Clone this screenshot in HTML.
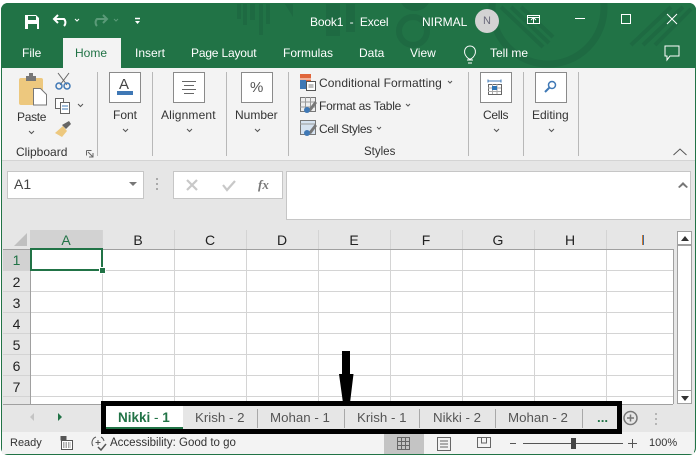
<!DOCTYPE html>
<html><head><meta charset="utf-8"><style>
html,body{margin:0;padding:0;background:#fff}
#r{position:relative;width:700px;height:458px;overflow:hidden;background:#fff;font-family:"Liberation Sans",sans-serif;font-size:12px;color:#333}
.a{position:absolute}
.t{position:absolute;white-space:nowrap;line-height:14px}
.w{color:#fff;font-size:12px}
.box{position:absolute;width:30px;height:29px;border:1px solid #8a8a8a;background:#fff;box-sizing:content-box}
.sep{position:absolute;top:72px;width:1px;height:84px;background:#b8b8b8}
.c{position:absolute;font-size:14px;line-height:16px;text-align:center;color:#222;top:232px}
.n{position:absolute;left:3px;width:27px;text-align:center;font-size:14px;line-height:16px;color:#222}
.tab{position:absolute;top:410px;font-size:13.3px;line-height:16px;white-space:nowrap;color:#555}
.v{position:absolute;top:409px;width:1px;height:19px;background:#a8a8a8}
</style></head><body><div id="r">
<div class="a" style="left:1px;top:3px;width:695px;height:452px;background:#e6e6e6;border-radius:7px;overflow:hidden;box-shadow:inset 0 0 0 1px #217346">
 <div class="a" style="left:0;top:0;width:695px;height:65px;background:#217346"></div>
 <svg class="a" style="left:0;top:0" width="695" height="65">
  <g fill="#1e6a42"><rect x="236" y="1" width="4" height="15"/><rect x="242" y="1" width="4" height="21"/><rect x="249" y="1" width="5" height="16"/><rect x="258" y="1" width="4" height="31"/><rect x="265" y="1" width="4" height="20"/><path d="M284 1h8v13z"/><rect x="325" y="1" width="14" height="32"/><rect x="345" y="1" width="9" height="28"/></g>
  <circle cx="412" cy="28" r="14" fill="none" stroke="#1e6a42" stroke-width="6"/>
  <circle cx="414" cy="-8" r="16" fill="#1e6a42"/>
  <circle cx="547" cy="5" r="56" fill="none" stroke="#1e6a42" stroke-width="7"/>
  <g stroke="#1e6a42" stroke-width="4" fill="none"><path d="M500 4l42 40M510 4l38 36M520 4l32 30M630 42l40-38M642 42l40-38M654 42l36-36"/></g>
 </svg>
 <div class="a" style="left:62px;top:35px;width:58px;height:31px;background:#f3f3f3"></div>
 <div class="a" style="left:1px;top:65px;width:693px;height:92px;background:#f3f3f3;border-bottom:1px solid #d4d4d4"></div>
</div>
<svg class="a" style="left:0;top:0" width="700" height="70" fill="none" stroke="#fff">
 <path d="M25 15h11l3 3v11H25z" fill="#fff" stroke="none"/><rect x="28" y="16" width="8" height="4" fill="#217346" stroke="none"/><rect x="28" y="24" width="9" height="5" fill="#217346" stroke="none"/>
 <path d="M54 19h10a5 5 0 0 1 0 7M58 15l-4 4 4 4" stroke-width="2"/>
 <path d="M75 19l2 2 2-2" stroke-width="1"/>
 <path d="M107 19H97a5 5 0 0 0 0 7M103 15l4 4-4 4" stroke-width="2" stroke="#5a9a78"/>
 <path d="M114 19l2 2 2-2" stroke-width="1" stroke="#5a9a78"/>
 <path d="M135 18.500h5" stroke-width="1.500"/><path d="M135 21h5l-2.500 3z" fill="#fff" stroke="none"/>
 <rect x="527.500" y="15.500" width="12" height="8" stroke-width="1"/><path d="M527 17.500h13M533.500 23v-5M531 20l2.500-2.500 2.500 2.500" stroke-width="1"/>
 <path d="M575 18.500h10" stroke-width="1"/>
 <rect x="621.500" y="14.500" width="9" height="9" stroke-width="1"/>
 <path d="M667 14l10 10M677 14l-10 10" stroke-width="1"/>
 <path d="M469 59c-7-5-5-13 1-13s8 8 1 13zM467 60h6M468 63h4" stroke-width="1"/>
 <path d="M665 46h14v10h-9l-3 4v-4h-2z" stroke-width="1"/>
</svg>
<div class="t w" style="left:310px;top:15px;letter-spacing:-.15px">Book1 &nbsp;-&nbsp; Excel</div>
<div class="t w" style="left:422px;top:15px">NIRMAL</div>
<div class="a" style="left:475px;top:9px;width:24px;height:24px;border-radius:12px;background:#d3d3d3;color:#6a6a7a;text-align:center;line-height:24px;font-size:11px">N</div>
<div class="t w" style="left:22px;top:46px">File</div>
<div class="t" style="left:75px;top:46px;color:#217346">Home</div>
<div class="t w" style="left:135px;top:46px">Insert</div>
<div class="t w" style="left:191px;top:46px;letter-spacing:-.18px">Page Layout</div>
<div class="t w" style="left:283px;top:46px">Formulas</div>
<div class="t w" style="left:359px;top:46px">Data</div>
<div class="t w" style="left:410px;top:46px">View</div>
<div class="t w" style="left:490px;top:46px">Tell me</div>

<svg class="a" style="left:0;top:68px" width="700" height="92" fill="none">
 <rect x="19" y="10" width="24" height="27" rx="2" fill="#edc87e"/>
 <rect x="26" y="8" width="10" height="5" fill="#777"/><rect x="29" y="5" width="4" height="4" fill="#777"/>
 <path d="M33.500 20.500h7l6 6v10.500h-13z" fill="#fff" stroke="#777"/>
 <path d="M58 5l9 12M69 5l-9 12" stroke="#666"/><circle cx="59" cy="18" r="3" stroke="#3f78b5" stroke-width="1.500"/><circle cx="67" cy="18" r="3" stroke="#3f78b5" stroke-width="1.500"/>
 <rect x="55.500" y="30.500" width="8" height="10" fill="#fff" stroke="#666"/><rect x="60.500" y="34.500" width="9" height="11" fill="#fff" stroke="#666"/><path d="M62 38h6M62 41h6" stroke="#3f78b5"/>
 <path d="M78 36l2.500 2.500 2.500-2.500M29 63l2.500 2.500 2.500-2.500M123 61l2.500 2.500 2.500-2.500M187 61l2.500 2.500 2.500-2.500M255 61l2.500 2.500 2.500-2.500M494 61l2.500 2.500 2.500-2.500M549 61l2.500 2.500 2.500-2.500M448 13l2 2 2-2M406 36l2 2 2-2M377 59l2 2 2-2" stroke="#555"/>
 <path d="M55 65l8-7 4 5-5 6z" fill="#edc87e"/><path d="M62 57l7-4 2 3-5 5z" fill="#666"/>
 <path d="M86.500 82.500h5M86.500 82.500v5M88 84l5 5M93 85v4h-4" stroke="#666"/>
 <rect x="300" y="6" width="11" height="10" fill="#e0653a"/><rect x="300" y="12" width="6" height="9" fill="#3f78b5"/><path d="M300 11h11" stroke="#fff"/><path d="M306.500 13.500h9v9h-9z" fill="#fff" stroke="#555"/><path d="M308.500 17h5M308.500 19h5" stroke="#555" stroke-width=".8"/>
 <path d="M300.500 29.500h15v14h-15z" fill="#eee" stroke="#777"/><path d="M300 34h15M300 39h15M305.500 29v14M310.500 29v14" stroke="#999"/><path d="M308 42l7-9 2 2-6 8z" fill="#777"/><circle cx="307" cy="42" r="3" fill="#3f78b5"/>
 <path d="M300.500 52.500h15v14h-15z" fill="#d5e2f0" stroke="#777"/><path d="M300 56h15" stroke="#999"/><path d="M308 65l7-9 2 2-6 8z" fill="#777"/><circle cx="307" cy="65" r="3" fill="#3f78b5"/>
</svg>
<div class="box" style="left:109px;top:72px"></div>
<div class="t" style="left:119px;top:77px;font-size:15px;line-height:16px;color:#444">A</div>
<div class="a" style="left:117px;top:91px;width:16px;height:4px;background:#3f78b5"></div>
<div class="box" style="left:173px;top:72px"></div>
<svg class="a" style="left:182px;top:81px" width="14" height="14" stroke="#666"><path d="M0 .500h14M2 4.500h10M0 8.500h14M2 12.500h10"/></svg>
<div class="box" style="left:241px;top:72px"></div>
<div class="t" style="left:250px;top:80px;font-size:15px;line-height:16px;color:#555">%</div>
<div class="box" style="left:480px;top:72px"></div>
<svg class="a" style="left:487px;top:79px" width="18" height="18" fill="none" stroke="#666"><path d="M1 .500v3M14 .500v3M1 2h13" stroke="#3f78b5"/><rect x="1.500" y="5.500" width="13" height="10" fill="#fff"/><path d="M1 9h13M1 12.500h13M5.500 5v10M10 5v10" stroke="#aaa"/><rect x="5" y="7" width="5" height="4" fill="#2e75b6" stroke="none"/></svg>
<div class="box" style="left:535px;top:72px"></div>
<svg class="a" style="left:543px;top:80px" width="15" height="15" fill="none" stroke="#3f78b5"><circle cx="9" cy="5" r="3.500" stroke-width="1.500"/><path d="M6.500 7.500L2 12" stroke-width="2"/></svg>
<div class="t" style="left:17px;top:110px;letter-spacing:-.3px">Paste</div>
<div class="t" style="left:113px;top:108px">Font</div>
<div class="t" style="left:161px;top:108px;letter-spacing:.15px">Alignment</div>
<div class="t" style="left:235px;top:108px">Number</div>
<div class="t" style="left:483px;top:108px;letter-spacing:-.3px">Cells</div>
<div class="t" style="left:532px;top:108px">Editing</div>
<div class="t" style="left:319px;top:76px;letter-spacing:.1px">Conditional Formatting</div>
<div class="t" style="left:319px;top:99px;letter-spacing:-.25px">Format as Table</div>
<div class="t" style="left:319px;top:122px;letter-spacing:-.35px">Cell Styles</div>
<div class="t" style="left:16px;top:145px;font-size:12px">Clipboard</div>
<div class="t" style="left:364px;top:145px;font-size:11.500px">Styles</div>
<div class="sep" style="left:97px"></div><div class="sep" style="left:152px"></div><div class="sep" style="left:226px"></div><div class="sep" style="left:288px"></div><div class="sep" style="left:468px"></div><div class="sep" style="left:523px"></div><div class="sep" style="left:578px"></div>
<svg class="a" style="left:672px;top:147px" width="16" height="9" fill="none" stroke="#555"><path d="M1.500 8l6.500-6 6.500 6"/></svg>

<div class="a" style="left:7px;top:171px;width:135px;height:26px;background:#fff;border:1px solid #c6c6c6"></div>
<div class="t" style="left:14px;top:177px;font-size:14px;color:#444">A1</div>
<div class="a" style="left:129px;top:182px;border:4px solid transparent;border-top:4px solid #777;border-bottom:0"></div>
<svg class="a" style="left:156px;top:178px" width="4" height="14" fill="#aaa"><rect width="2" height="2"/><rect y="5" width="2" height="2"/><rect y="10" width="2" height="2"/></svg>
<div class="a" style="left:173px;top:171px;width:108px;height:26px;background:#fff;border:1px solid #c6c6c6"></div>
<svg class="a" style="left:186px;top:179px" width="60" height="14" fill="none" stroke="#c8c8c8" stroke-width="2.200"><path d="M1 1l10 10M11 1L1 11M37 6l4 5 8-9"/></svg>
<div class="t" style="left:258px;top:177px;font:italic bold 13px 'Liberation Serif',serif;color:#777">fx</div>
<div class="a" style="left:286px;top:171px;width:403px;height:47px;background:#fff;border:1px solid #c6c6c6"></div>
<svg class="a" style="left:677px;top:181px" width="14" height="8"><path d="M1 6l5-5 5 5-1.500 1L6 4 2.500 7z" fill="#777"/></svg>

<div class="a" style="left:30px;top:230px;width:73px;height:19px;background:#d2d2d2"></div>
<svg class="a" style="left:0;top:230px" width="30" height="20"><path d="M27 3v13H14z" fill="#c0c0c0"/></svg>
<div class="a" style="left:3px;top:250px;width:27px;height:21px;background:#d2d2d2"></div>
<div class="c" style="left:30px;width:72px;color:#217346">A</div><div class="c" style="left:102px;width:72px">B</div><div class="c" style="left:174px;width:72px">C</div><div class="c" style="left:246px;width:72px">D</div><div class="c" style="left:318px;width:72px">E</div><div class="c" style="left:390px;width:72px">F</div><div class="c" style="left:462px;width:72px">G</div><div class="c" style="left:534px;width:72px">H</div>

<div class="a" style="left:30px;top:249px;width:644px;height:155px;background:#fff"></div>
<svg class="a" style="left:0;top:230px" width="700" height="175" stroke="#d4d4d4" stroke-width="1">
 <path d="M102.500 0v174M174.500 0v174M246.500 0v174M318.500 0v174M390.500 0v174M462.500 0v174M534.500 0v174M606.500 0v174"/>
 <path d="M3 40.500h670M3 61.500h670M3 82.500h670M3 103.500h670M3 124.500h670M3 145.500h670M3 166.500h670"/>
 <path d="M3 19.500h670M673.500 19v155M30.500 19v155M3 174.500h670" stroke="#a0a0a0"/>
</svg>
<div class="n" style="top:252px;color:#217346">1</div><div class="n" style="top:274px">2</div><div class="n" style="top:295px">3</div><div class="n" style="top:316px">4</div><div class="n" style="top:337px">5</div><div class="n" style="top:358px">6</div><div class="n" style="top:379px">7</div>
<div class="a" style="left:30px;top:248px;width:73px;height:23px;border:2px solid #217346;box-sizing:border-box"></div>
<div class="a" style="left:99px;top:267px;width:7px;height:7px;background:#217346;border:1px solid #fff;box-sizing:border-box"></div>

<div class="a" style="left:677px;top:231px;width:15px;height:173px;background:#fff;border:1px solid #a0a0a0;box-sizing:border-box"></div>
<div class="a" style="left:677px;top:231px;width:15px;height:15px;border:1px solid #a0a0a0;border-bottom:2px solid #a0a0a0;box-sizing:border-box;background:#fff"></div>
<div class="a" style="left:681px;top:236px;border:4px solid transparent;border-bottom:5px solid #333;border-top:0"></div>
<div class="a" style="left:677px;top:390px;width:15px;height:14px;border:1px solid #a0a0a0;box-sizing:border-box;background:#fff"></div>
<div class="a" style="left:681px;top:396px;border:4px solid transparent;border-top:5px solid #333;border-bottom:0"></div>
<div class="a" style="left:642px;top:235px;width:2px;height:10px;background:linear-gradient(90deg,#d4782a 50%,#3a6ea5 50%)"></div>

<div class="a" style="left:30px;top:413px;border:4px solid transparent;border-right:4px solid #c4c4c4;border-left:0"></div>
<div class="a" style="left:58px;top:413px;border:4px solid transparent;border-left:4px solid #217346;border-right:0"></div>

<div class="a" style="left:106px;top:406px;width:511px;height:23px;background:#e6e6e6"></div>
<div class="a" style="left:106px;top:406px;width:77px;height:23px;background:#fff;border-bottom:2px solid #217346;box-sizing:border-box"></div>
<div class="tab" style="left:118px;color:#217346;font-weight:bold;font-size:13.500px">Nikki <span style="font-weight:normal">-</span> 1</div>
<div class="tab" style="left:195px">Krish - 2</div><div class="v" style="left:257px"></div>
<div class="tab" style="left:270px">Mohan - 1</div><div class="v" style="left:344px"></div>
<div class="tab" style="left:357px">Krish - 1</div><div class="v" style="left:419px"></div>
<div class="tab" style="left:433px">Nikki - 2</div><div class="v" style="left:495px"></div>
<div class="tab" style="left:508px">Mohan - 2</div><div class="v" style="left:582px"></div>
<div class="tab" style="left:597px;color:#217346;font-weight:bold">...</div>
<div class="a" style="left:101px;top:401px;width:521px;height:33px;border:5px solid #000;box-sizing:border-box"></div>
<svg class="a" style="left:336px;top:349px" width="20" height="56"><path d="M6 2h8v23h3.500L14 54H7L3 25h3z" fill="#000"/></svg>
<svg class="a" style="left:622px;top:410px" width="40" height="18" fill="none" stroke="#777"><circle cx="8.500" cy="8" r="6.500" stroke-width="1.500"/><path d="M5 8h7M8.500 4.500v7" stroke-width="1.500"/><path d="M34 3v2M34 8v2M34 13v2" stroke="#b5b5b5" stroke-width="2"/></svg>

<div class="a" style="left:2px;top:434px;width:692px;height:20px;background:#f3f3f3"></div>
<div class="a" style="left:2px;top:432px;width:99px;height:2px;background:#f3f3f3"></div>
<div class="a" style="left:622px;top:432px;width:72px;height:2px;background:#f3f3f3"></div>
<div class="a" style="left:384px;top:434px;width:40px;height:20px;background:#c4c4c4"></div>
<div class="t" style="left:10px;top:436px;font-size:11px">Ready</div>
<svg class="a" style="left:60px;top:436px" width="14" height="14" fill="none" stroke="#555"><rect x="1" y="0" width="5" height="4" fill="#555"/><rect x="1.500" y="4.500" width="11" height="9" fill="#fff"/><path d="M3 7h8M3 9h8M3 11h8" stroke-dasharray="1.500 1"/></svg>
<svg class="a" style="left:90px;top:436px" width="18" height="15" fill="none" stroke="#555"><path d="M6 1a6 6 0 0 0-3 9M11 1a6 6 0 0 1 3 4M8 4v5M5.500 6.500h5"/><path d="M8 11l3 3 5-6" stroke-width="1.500"/></svg>
<div class="t" style="left:110px;top:436px;font-size:11.500px">Accessibility: Good to go</div>
<svg class="a" style="left:397px;top:437px" width="120" height="14" fill="none" stroke="#666"><rect x=".5" y=".5" width="12" height="12"/><path d="M4.500 0v12M8.500 0v12M0 4.500h12M0 8.500h12"/><rect x="40.500" y=".5" width="13" height="13"/><path d="M43 4h8M43 7h8M43 10h8"/><path d="M80.500 10.500V.5h13v10zM84.500 1v5h5V1"/></svg>
<svg class="a" style="left:508px;top:436px" width="135" height="14" fill="none" stroke="#555"><path d="M2 7.500h6M15 7.500h100M120 7.500h9M124.500 3v9"/><rect x="63" y="2" width="5" height="11" fill="#444" stroke="none"/></svg>
<div class="t" style="left:649px;top:436px;font-size:11px">100%</div>
</div></body></html>
